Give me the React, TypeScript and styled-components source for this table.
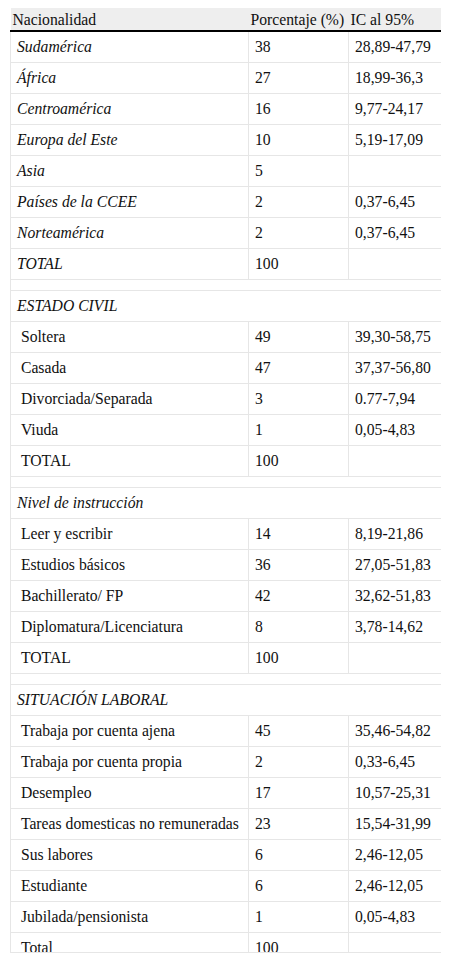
import styled, { createGlobalStyle } from 'styled-components';
import { FC } from 'react';

const GlobalStyle = createGlobalStyle`
  body {
    margin: 0;
    background: #fff;
    color: #111;
  }
`;

const serif = `'Liberation Serif', 'DejaVu Serif', 'Times New Roman', serif`;

const StyledClip = styled.div`
  margin: 8px 0 0 10px;
  width: 431px;
  height: 944px;
  overflow: hidden;
  border-bottom: 1px solid #e6e6e6;
`;

const StyledTable = styled.table`
  width: 431px;
  border-collapse: collapse;
  table-layout: fixed;
  font-family: ${serif};
  font-size: 15.7px;
  color: #111;
`;

const StyledHeadCell = styled.th`
  background: #eeeeee;
  border-bottom: 2px solid #000;
  font-family: ${serif};
  font-weight: normal;
  text-align: left;
  padding: 1px 2px 0;
  height: 21px;
  white-space: nowrap;
`;

const StyledCell = styled.td<{ $italic?: boolean }>`
  border: 1px solid #e6e6e6;
  height: 30px;
  padding: 0 6px;
  font-family: ${serif};
  font-style: ${({ $italic }) => ($italic ? 'italic' : 'normal')};
  white-space: nowrap;
  vertical-align: middle;
`;

const StyledSpacer = styled.td`
  border: 1px solid #e6e6e6;
  height: 10px;
  padding: 0;
`;

type Row = [string, string, string];

type Section = {
  title?: string;
  indent: boolean;
  rows: Row[];
};

const sections: Section[] = [
  {
    indent: false,
    rows: [
      ['Sudamérica', '38', '28,89-47,79'],
      ['África', '27', '18,99-36,3'],
      ['Centroamérica', '16', '9,77-24,17'],
      ['Europa del Este', '10', '5,19-17,09'],
      ['Asia', '5', ''],
      ['Países de la CCEE', '2', '0,37-6,45'],
      ['Norteamérica', '2', '0,37-6,45'],
      ['TOTAL', '100', ''],
    ],
  },
  {
    title: 'ESTADO CIVIL',
    indent: true,
    rows: [
      ['Soltera', '49', '39,30-58,75'],
      ['Casada', '47', '37,37-56,80'],
      ['Divorciada/Separada', '3', '0.77-7,94'],
      ['Viuda', '1', '0,05-4,83'],
      ['TOTAL', '100', ''],
    ],
  },
  {
    title: 'Nivel de instrucción',
    indent: true,
    rows: [
      ['Leer y escribir', '14', '8,19-21,86'],
      ['Estudios básicos', '36', '27,05-51,83'],
      ['Bachillerato/ FP', '42', '32,62-51,83'],
      ['Diplomatura/Licenciatura', '8', '3,78-14,62'],
      ['TOTAL', '100', ''],
    ],
  },
  {
    title: 'SITUACIÓN LABORAL',
    indent: true,
    rows: [
      ['Trabaja por cuenta ajena', '45', '35,46-54,82'],
      ['Trabaja por cuenta propia', '2', '0,33-6,45'],
      ['Desempleo', '17', '10,57-25,31'],
      ['Tareas domesticas no remuneradas', '23', '15,54-31,99'],
      ['Sus labores', '6', '2,46-12,05'],
      ['Estudiante', '6', '2,46-12,05'],
      ['Jubilada/pensionista', '1', '0,05-4,83'],
      ['Total', '100', ''],
    ],
  },
];

const SectionRows: FC<{ section: Section; first: boolean }> = ({ section, first }) => (
  <>
    {!first && (
      <tr>
        <StyledSpacer colSpan={3} />
      </tr>
    )}
    {section.title && (
      <tr>
        <StyledCell colSpan={3} $italic>
          {section.title}
        </StyledCell>
      </tr>
    )}
    {section.rows.map(([label, pct, ic]) => (
      <tr key={label + pct}>
        <StyledCell $italic={!section.indent}>
          {section.indent ? '\u00a0' + label : label}
        </StyledCell>
        <StyledCell>{pct}</StyledCell>
        <StyledCell>{ic}</StyledCell>
      </tr>
    ))}
  </>
);

export default function App() {
  return (
    <>
      <GlobalStyle />
      <StyledClip>
        <StyledTable>
          <colgroup>
            <col style={{ width: 238 }} />
            <col style={{ width: 100 }} />
            <col style={{ width: 93 }} />
          </colgroup>
          <thead>
            <tr>
              <StyledHeadCell>Nacionalidad</StyledHeadCell>
              <StyledHeadCell>Porcentaje (%)</StyledHeadCell>
              <StyledHeadCell>IC al 95%</StyledHeadCell>
            </tr>
          </thead>
          <tbody>
            {sections.map((s, i) => (
              <SectionRows key={i} section={s} first={i === 0} />
            ))}
          </tbody>
        </StyledTable>
      </StyledClip>
    </>
  );
}
